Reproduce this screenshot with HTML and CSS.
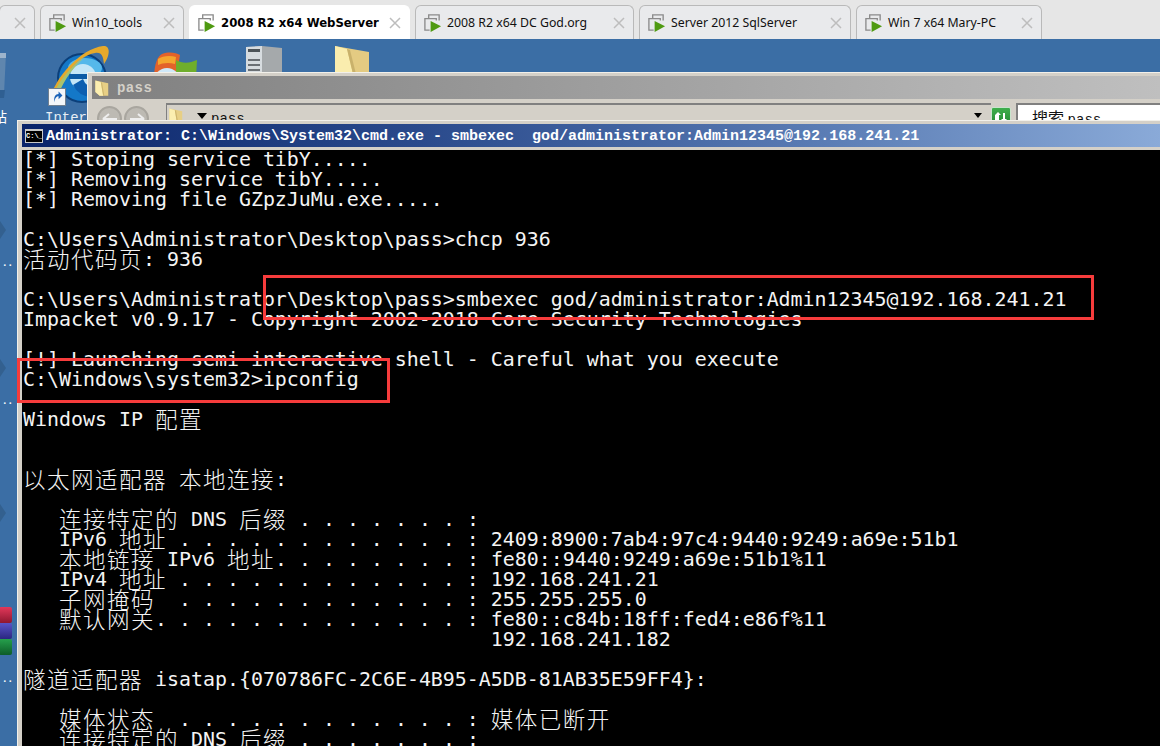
FILE: index.html
```html
<!DOCTYPE html>
<html lang="zh">
<head>
<meta charset="utf-8">
<title>2008 R2 x64 WebServer</title>
<link rel="stylesheet" href="styles.css">
</head>
<body>
<svg class="defs" width="0" height="0" aria-hidden="true">
  <symbol id="vm" viewBox="0 0 20 20">
    <path d="M6 6V2h11v4M17 6v2M2 16V6h12v2M2 16v2h5" fill="none" stroke="#8a8a8a" stroke-width="1.4"/>
    <path d="M8 8.5 19 14 8 20z" fill="#4f9a12"/>
  </symbol>
  <symbol id="x" viewBox="0 0 12 12">
    <path d="M1 1 11 11M11 1 1 11" stroke="#bdbdbd" stroke-width="1.5" fill="none"/>
  </symbol>
  <symbol id="folder" viewBox="0 0 36 40">
    <path d="M1 1 34 8V40H12L1 30z" fill="#e7cf85"/>
    <path d="M1 1 15 5 21 40H12L1 30z" fill="#fbeeb0"/>
    <path d="M21 40 15 5 18 6 24 40z" fill="#cdb56e"/>
  </symbol>
</svg>

<nav class="tabbar">
  <div class="tab tab-cut"><svg class="tab-x"><use href="#x"/></svg></div>
  <div class="tab"><svg class="tab-icon"><use href="#vm"/></svg><span class="tab-label">Win10_tools</span><svg class="tab-x"><use href="#x"/></svg></div>
  <div class="tab tab-active"><svg class="tab-icon"><use href="#vm"/></svg><span class="tab-label">2008 R2 x64 WebServer</span><svg class="tab-x"><use href="#x"/></svg></div>
  <div class="tab"><svg class="tab-icon"><use href="#vm"/></svg><span class="tab-label">2008 R2 x64 DC God.org</span><svg class="tab-x"><use href="#x"/></svg></div>
  <div class="tab"><svg class="tab-icon"><use href="#vm"/></svg><span class="tab-label">Server 2012 SqlServer</span><svg class="tab-x"><use href="#x"/></svg></div>
  <div class="tab"><svg class="tab-icon"><use href="#vm"/></svg><span class="tab-label">Win 7 x64 Mary-PC</span><svg class="tab-x"><use href="#x"/></svg></div>
</nav>

<main class="desktop">
  <!-- recycle bin -->
  <svg class="dicon bin" viewBox="0 0 8 50"><path d="M0 3H6L4 44H0z" fill="#5f86ae"/><path d="M0 3H6V8H0z" fill="#9db4cc"/><path d="M0 40H5L4 48H0z" fill="#2f5f92"/></svg>
  <span class="dlabel label-bin">站</span>

  <!-- IE -->
  <svg class="dicon ie" viewBox="0 0 64 64">
    <circle cx="35" cy="34" r="24" fill="#1478c8"/>
    <circle cx="35" cy="34" r="24" fill="none" stroke="#0b3f7a" stroke-width="2"/>
    <ellipse cx="38" cy="24" rx="17" ry="10" fill="#55b8ea"/>
    <circle cx="36" cy="33" r="13" fill="#c4e6f7"/>
    <path d="M22 30H50V35H22z" fill="#0b5aa5"/>
    <path d="M36 35a13 13 0 0 0 14 9l-6 9a22 22 0 0 1-18-12z" fill="#0d5fb0"/>
    <path d="M2 58C8 32 34 5 56 2c8-1 7 10 1 18-1-8-2-12-9-11C30 12 12 36 8 58z" fill="#e6a92b"/>
    <path d="M4 56C10 38 24 22 38 13 24 25 13 42 9 58z" fill="#a9c26d"/>
  </svg>
  <div class="shortcut"><svg viewBox="0 0 18 18" width="14" height="14"><path d="M6 16C4 9 7 5 11 5V2l5 5-5 5V8C8 8 6 11 6 16z" fill="#1c63b8"/></svg></div>
  <span class="dlabel label-ie">Interne</span>

  <!-- Windows -->
  <svg class="dicon win" viewBox="0 0 52 32">
    <path d="M6 28C6 12 10 5 14 3c8-3 14-1 18 1l-4 24z" fill="#e3622a"/>
    <path d="M10 8c4-3 12-4 18-2l-1 7c-6-2-13-1-17 1z" fill="#f5a52d"/>
    <path d="M28 9c7 4 14 3 21 0l-1 18-20 4z" fill="#6fae2b"/>
    <circle cx="19" cy="30" r="13" fill="#cfe8f8"/>
    <circle cx="19" cy="30" r="8" fill="#8ec6ee"/>
  </svg>

  <!-- Server -->
  <svg class="dicon srv" viewBox="0 0 38 28">
    <path d="M1 1 17 0 37 2V28H1z" fill="#a5a9ab"/>
    <path d="M1 1 17 0V28H1z" fill="#d7dcdf"/>
    <path d="M3 3H15V6H3z" fill="#4d5458"/>
    <path d="M3 13H15V15H3zM3 18H15V20H3zM3 23H15V25H3z" fill="#6b7074"/>
  </svg>

  <!-- Folder -->
  <svg class="dicon dfolder" viewBox="0 0 36 28">
    <path d="M1 0 35 6V28H1z" fill="#e4cb82"/>
    <path d="M1 0 13 3 19 28H1z" fill="#faedae"/>
    <path d="M19 28 13 3 16 4 22 28z" fill="#c9b16b"/>
  </svg>

  <!-- left column shortcuts -->
  <span class="shade shade-a"></span>
  <span class="shade shade-b"></span>
  <span class="shade shade-c"></span>
  <span class="dlabel dots dots-a">..</span>
  <span class="dlabel dots dots-b">..</span>
  <span class="dlabel dots dots-c">..</span>
  <div class="rar"><i class="rar-r"></i><i class="rar-b"></i><i class="rar-g"></i></div>

  <!-- Explorer window -->
  <section class="explorer">
    <header class="ex-title">
      <svg class="ex-ficon"><use href="#folder"/></svg>
      <span>pass</span>
    </header>
    <div class="ex-toolbar">
      <div class="ex-nav">
        <span class="round"><svg viewBox="0 0 24 24" width="24" height="24"><path d="M5 12H19M5 12l6-5M5 12l6 5" stroke="#eee" stroke-width="2" fill="none"/></svg></span>
        <span class="round"><svg viewBox="0 0 24 24" width="24" height="24"><path d="M5 12H19M19 12l-6-5M19 12l-6 5" stroke="#eee" stroke-width="2" fill="none"/></svg></span>
      </div>
      <div class="ex-address">
        <svg class="ex-aicon"><use href="#folder"/></svg>
        <i class="tri"></i>
        <span class="ex-path">pass</span>
        <i class="tri tri-end"></i>
      </div>
      <div class="ex-refresh"><svg viewBox="0 0 20 14" width="20" height="14"><path d="M4 11V5l3-3 3 3H8v6zM12 3v6l-2 0 3 3 3-3h-2V3z" fill="#fff"/></svg></div>
      <div class="ex-search">搜索 <span>pass</span></div>
    </div>
  </section>

  <!-- Console window -->
  <section class="console">
    <header class="con-title">
      <span class="con-icon">C:\_</span>
      <span class="con-text">Administrator: C:\Windows\System32\cmd.exe - smbexec  god/administrator:Admin12345@192.168.241.21</span>
    </header>
<pre class="con-body">[*] Stoping service tibY.....
[*] Removing service tibY.....
[*] Removing file GZpzJuMu.exe.....

C:\Users\Administrator\Desktop\pass&gt;chcp 936
<b>活动代码页</b>: 936

C:\Users\Administrator\Desktop\pass&gt;smbexec god/administrator:Admin12345@192.168.241.21
Impacket v0.9.17 - Copyright 2002-2018 Core Security Technologies

[!] Launching semi interactive shell - Careful what you execute
C:\Windows\system32&gt;ipconfig

Windows IP <b>配置</b>


<b>以太网适配器</b> <b>本地连接</b>:

   <b>连接特定的</b> DNS <b>后缀</b> . . . . . . . :
   IPv6 <b>地址</b> . . . . . . . . . . . . : 2409:8900:7ab4:97c4:9440:9249:a69e:51b1
   <b>本地链接</b> IPv6 <b>地址</b>. . . . . . . . : fe80::9440:9249:a69e:51b1%11
   IPv4 <b>地址</b> . . . . . . . . . . . . : 192.168.241.21
   <b>子网掩码</b>  . . . . . . . . . . . . : 255.255.255.0
   <b>默认网关</b>. . . . . . . . . . . . . : fe80::c84b:18ff:fed4:e86f%11
                                       192.168.241.182

<b>隧道适配器</b> isatap.{070786FC-2C6E-4B95-A5DB-81AB35E59FF4}:

   <b>媒体状态</b>  . . . . . . . . . . . . : <b>媒体已断开</b>
   <b>连接特定的</b> DNS <b>后缀</b> . . . . . . . :
</pre>
  </section>

  <!-- annotations -->
  <div class="mark mark-cmd"></div>
  <div class="mark mark-ip"></div>
</main>
</body>
</html>
```
FILE: styles.css
```css
* { box-sizing: border-box; }
html, body { margin: 0; height: 100%; overflow: hidden; }
body { display: flex; flex-direction: column; background: #3b6ea5; }
.defs { position: absolute; }

/* tabs */
.tabbar {
  display: grid;
  grid-template-columns: 36px 144px 221px 219px 212px 186px;
  column-gap: 5px;
  height: 39px;
  padding-top: 5px;
  margin-left: -1px;
  background: #e6e6e6;
  flex: none;
  font: 12.3px "Noto Sans", "DejaVu Sans", sans-serif;
  color: #111;
}
.tab {
  display: flex;
  align-items: center;
  padding: 0 8px 0 7px;
  background: #e9eaec;
  border: 1px solid #b9b9b9;
  border-bottom: 0;
  border-radius: 6px 6px 0 0;
}
.tab-active { background: #fff; border-color: #fff; font: 700 11.7px "DejaVu Sans", sans-serif; color: #000; }
.tab-icon { width: 19px; height: 19px; flex: none; margin-right: 5px; }
.tab-label { white-space: nowrap; }
.tab-x { width: 12px; height: 12px; margin-left: auto; flex: none; }

/* desktop */
.desktop { position: relative; flex: 1; overflow: hidden; background: #3b6ea5; }
.dicon { position: absolute; display: block; }
.dlabel {
  position: absolute;
  color: #fff;
  font: 14px "Liberation Serif", "Noto Sans CJK SC", serif;
  white-space: nowrap;
}
.bin { left: 0; top: 11px; width: 8px; height: 50px; }
.label-bin { left: -7px; top: 67px; }
.ie { left: 47px; top: 5px; width: 64px; height: 64px; }
.shortcut {
  position: absolute;
  left: 48px;
  top: 49px;
  width: 18px;
  height: 18px;
  display: flex;
  align-items: center;
  justify-content: center;
  background: #f4f6f9;
  border: 1px solid #6f7f90;
}
.label-ie { left: 45px; top: 71px; font: 14px "Liberation Mono", monospace; color: #e8eef5; }
.win { left: 148px; top: 12px; width: 52px; height: 32px; }
.srv { left: 245px; top: 7px; width: 38px; height: 28px; }
.dfolder { left: 334px; top: 7px; width: 36px; height: 28px; }

.shade {
  position: absolute;
  left: 0;
  width: 0;
  height: 0;
  border-left: 6px solid #33608f;
  border-top: 9px solid transparent;
  border-bottom: 9px solid transparent;
}
.shade-a { top: 182px; }
.shade-b { top: 320px; }
.shade-c { top: 465px; }
.dots { left: 3px; font-size: 14px; letter-spacing: 2px; line-height: 14px; }
.dots-a { top: 216px; }
.dots-b { top: 354px; }
.dots-c { top: 632px; }
.rar { position: absolute; left: -1px; top: 568px; width: 13px; display: flex; flex-direction: column; }
.rar i { display: block; height: 16px; border-radius: 2px; }
.rar-r { background: linear-gradient(#e2385a, #8f1730); }
.rar-b { background: linear-gradient(#5a54c8, #2a2680); }
.rar-g { background: linear-gradient(#26a04c, #0d5c28); }

/* explorer */
.explorer {
  position: absolute;
  left: 87px;
  top: 33px;
  width: 1090px;
  height: 60px;
  padding: 3px 0 0 4px;
  background: #d4d0c8;
  border-top: 1px solid #f2f0ea;
  border-left: 1px solid #f2f0ea;
  overflow: hidden;
}
.ex-title {
  display: flex;
  align-items: center;
  height: 23px;
  padding-left: 3px;
  background: linear-gradient(90deg, #808080, #c0c0c0);
  color: #d4d0c8;
  font: 700 14px "Liberation Mono", monospace;
  letter-spacing: .4px;
}
.ex-ficon { width: 14px; height: 18px; margin-right: 8px; flex: none; }
.ex-toolbar {
  display: flex;
  align-items: flex-start;
  margin-top: 4px;
  height: 24px;
  font: 14px "Liberation Mono", monospace;
  color: #111;
}
.ex-nav { display: flex; gap: 2px; margin: 3px 0 0 5px; width: 69px; flex: none; }
.round {
  width: 25px;
  height: 25px;
  border-radius: 50%;
  background: #bdbab3;
  border: 2px solid #a9a69f;
  display: flex;
  align-items: center;
  justify-content: center;
}
.round svg { flex: none; }
.ex-address {
  display: flex;
  align-items: flex-start;
  width: 825px;
  height: 24px;
  padding: 2px 0 0 2px;
  border-top: 2px solid #808080;
  border-left: 1px solid #808080;
  flex: none;
}
.ex-aicon { width: 14px; height: 18px; flex: none; margin-right: 14px; }
.tri {
  width: 0;
  height: 0;
  margin-top: 6px;
  border-top: 6px solid #000;
  border-left: 5px solid transparent;
  border-right: 5px solid transparent;
  flex: none;
}
.ex-path { margin: 4px 0 0 4px; }
.tri-end { margin-left: auto; margin-right: 9px; border-width: 5px 4px 0; }
.ex-refresh {
  width: 20px;
  height: 24px;
  margin-top: 4px;
  padding-top: 2px;
  background: linear-gradient(#3fae4c, #1e7d2c);
  border: 1px solid #c9e4cc;
  border-radius: 2px;
  flex: none;
}
.ex-refresh svg { display: block; margin-left: -1px; }
.ex-search {
  margin: 0 0 0 5px;
  width: 200px;
  height: 24px;
  padding: 0 0 0 14px;
  background: #fff;
  border-top: 2px solid #808080;
  border-left: 2px solid #808080;
  font: 16px "Noto Sans CJK SC", sans-serif;
  color: #111;
  white-space: nowrap;
  flex: none;
}
.ex-search span { font: 14px "Liberation Mono", monospace; }

/* console */
.console {
  position: absolute;
  left: 17px;
  top: 81px;
  width: 1180px;
  height: 660px;
  padding: 3px 0 0 4px;
  background: #d4d0c8;
  border-top: 1px solid #f2f0ea;
  border-left: 1px solid #f2f0ea;
}
.con-title {
  display: flex;
  align-items: center;
  width: 1139px;
  height: 23px;
  padding: 3px 0 0 3px;
  background: linear-gradient(90deg, #0a246a 0%, #2a4a8c 35%, #5a7cb4 70%, #8aaad8 100%);
  color: #fff;
  font: 700 15px/20px "Liberation Mono", monospace;
  white-space: pre;
}
.con-icon {
  width: 18px;
  height: 14px;
  margin: -3px 3px 0 0;
  background: #000;
  border: 1px solid #c8c8c8;
  border-top-width: 2px;
  color: #fff;
  font: 700 7px/10px "Liberation Mono", monospace;
  flex: none;
  overflow: hidden;
}
.con-body {
  margin: 3px 0 0;
  padding: 0 0 0 1px;
  height: 620px;
  background: #000;
  color: #f4f4f4;
  font: 19.93px/20px "DejaVu Sans Mono", monospace;
  overflow: hidden;
}
.con-body b {
  display: inline-block;
  height: 20px;
  vertical-align: top;
  font: 300 22.5px/16px "Noto Sans CJK SC", sans-serif;
  letter-spacing: 1.5px;
}

/* red annotation rectangles */
.mark { position: absolute; border: 3px solid #f73c3c; pointer-events: none; }
.mark-cmd { left: 263px; top: 236px; width: 831px; height: 45px; }
.mark-ip { left: 17px; top: 319px; width: 373px; height: 45px; }
```
